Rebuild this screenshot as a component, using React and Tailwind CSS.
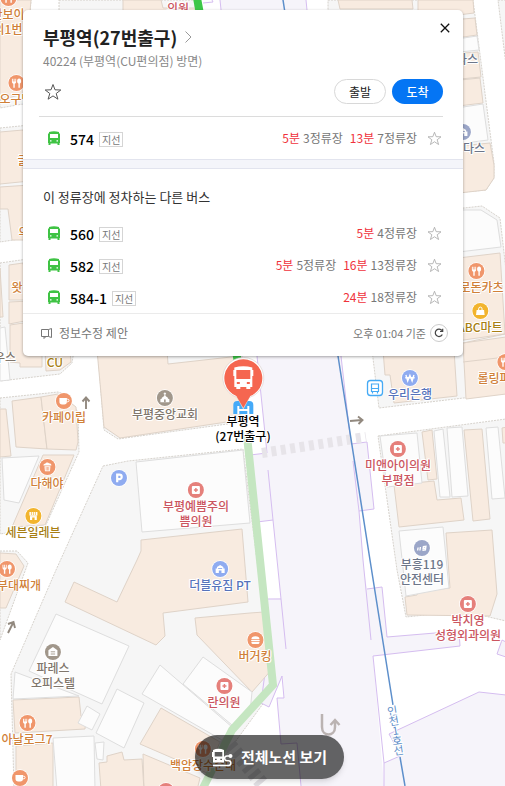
import React from 'react';

const others = [
  { id: '560', arrivals: [['5분', '4정류장']] },
  { id: '582', arrivals: [['5분', '5정류장'], ['16분', '13정류장']] },
  { id: '584-1', arrivals: [['24분', '18정류장']] },
];

// city blocks with the dashed kerb
const blocks = [
  '0,0 31,0 23,104 0,108',
  '59,0 195,0 195,40 59,40',
  '0,128 40,124 40,236 0,242',
  '0,263 90,250 72,363 60,374 0,381',
  '0,398 58,392 64,394 78,412 79,452 45,527 0,534',
  '0,551 17,551 28,563 0,640',
  '97,340 104,430 118,439 242,422 242,340',
  '103,466 128,461 243,449 262,600 276,686 200,790 14,790 11,674 56,570',
  '328,0 473,0 494,163 494,178 486,190 328,205',
  '400,215 482,206 500,218 506,270 506,393 379,408 372,350',
  '498,0 506,0 506,65',
  '378,436 506,419 506,621 463,611 406,617 397,570',
];

const tan = [
  '0,0 31,0 23,94 0,100',
  '123,0 161,0 163,8 195,8 195,30 123,30',
  '0,132 23,130 40,180 0,184',
  '0,187 30,185 30,240 12,240 8,209 0,209',
  '9,265 23,263 30,300 9,300',
  '9,302 30,301 30,320 9,324',
  '0,268 3,317 0,317',
  '10,325 30,322 42,345 42,367 20,367 20,363 10,362',
  '45,350 70,350 71,362 60,370 46,371',
  '12,401 41,397 47,449 16,447',
  '41,397 58,394 62,396 76,407 78,442 76,450 47,449',
  '0,409 6,409 11,456 0,457',
  '43,455 74,455 45,525 12,527',
  '0,553 16,554 24,566 6,608 0,608',
  '97,350 167,350 168,364 240,356 240,420 120,438 104,427',
  '141,540 242,529 248,602 163,613 165,636 156,645 65,602 74,582 117,602 137,560 141,551',
  '195,618 250,613 264,612 273,668 252,692 197,635',
  '13,700 79,697 81,716 86,718 85,729 15,733',
  '161,708 220,742 207,773 140,744',
  '143,754 200,778 197,790 144,790',
  '99,763 107,762 107,756 122,752 124,760 142,759 144,790 101,790',
  '16,746 53,743 53,790 16,790',
  '338,0 412,0 413,9 340,9',
  '418,0 473,0 474,13 418,20',
  '450,20 475,18 477,35 450,39',
  '450,54 478,52 481,77 450,80',
  '450,81 480,78 483,103 450,107',
  '450,147 490,143 494,165 494,178 486,190 450,194',
  '450,259 500,253 505,334 450,342',
  '463,343 506,337 506,394 466,399',
  '383,350 454,350 457,396 394,403 390,375 385,375',
  '422,432 432,430 437,479 428,480',
  '464,430 482,429 490,519 473,521 471,501',
  '502,428 507,427 507,443 503,443',
  '394,485 434,481 437,500 461,498 464,520 399,527',
  '446,533 492,530 497,594 490,616 407,615 405,597 417,595 418,591 450,588',
];

const pale = [
  '0,328 5,327 10,380 0,381',
  '2,458 39,456 19,503 4,500',
  '136,462 243,450 250,523 142,532',
  '56,614 129,646 102,704 29,671',
  '15,672 79,696 13,699',
  '87,706 100,714 92,730 78,723',
  '117,689 144,703 124,748 96,733',
  '160,665 232,727 222,740 142,694',
  '203,657 252,692 250,712 232,725 183,684',
  '53,738 94,736 95,790 57,790',
  '95,743 104,742 103,760 97,759',
  '450,40 477,36 479,50 450,53',
  '450,109 483,104 488,140 450,145',
  '450,210 481,210 497,220 501,247 450,253',
  '380,436 417,433 422,483 387,487',
  '434,431 443,429 450,497 440,497',
  '447,428 462,427 468,496 452,497',
  '486,428 498,427 505,498 492,499',
  '399,531 443,527 449,588 406,596',
];

const tones = {
  food: 'text-[#d08038]',
  clinic: 'text-[#cb5560]',
  gray: 'text-[#80766c]',
  blue: 'text-[#5673bb]',
  mart: 'text-[#a87f14]',
  slate: 'text-[#6d7689]',
};

const fills = {
  food: '#f0966b',
  clinic: '#e5807b',
  gray: '#a1978b',
  blue: '#8fabf0',
  mart: '#f2b42e',
  slate: '#9ba6c8',
};

const pins = [
  { x: 8, y: -2, tone: 'food', icon: 'fork', lines: ['안보이', '의1번'] },
  { x: 16, y: 83, tone: 'food', icon: 'fork', lines: ['오구당'] },
  { x: 64, y: 401, tone: 'food', icon: 'cup', lines: ['카페이립'] },
  { x: 165, y: 398, tone: 'gray', icon: 'church', lines: ['부평중앙교회'] },
  { x: 47, y: 467, tone: 'food', icon: 'beer', lines: ['다해야'] },
  { x: 119, y: 478, tone: 'blue', icon: 'parking', lines: [] },
  { x: 33, y: 516, tone: 'mart', icon: 'store', lines: ['세븐일레븐'] },
  { x: 196, y: 490, tone: 'clinic', icon: 'cross', lines: ['부평예쁨주의', '쁨의원'] },
  { x: 7, y: 569, tone: 'food', icon: 'fork', lines: [] },
  { x: 220, y: 569, tone: 'blue', icon: 'gym', lines: ['더블유짐 PT'] },
  { x: 53, y: 652, tone: 'gray', icon: 'home', lines: ['파레스', '오피스텔'] },
  { x: 255, y: 640, tone: 'food', icon: 'burger', lines: ['버거킹'] },
  { x: 224, y: 686, tone: 'clinic', icon: 'cross', lines: ['란의원'] },
  { x: 27, y: 723, tone: 'food', icon: 'fork', lines: ['아날로그7'] },
  { x: 203, y: 749, tone: 'food', icon: 'fork', lines: ['백암장수순대'] },
  { x: 20, y: 778, tone: 'food', icon: 'cup', lines: [] },
  { x: 166, y: 791, tone: 'clinic', icon: 'cross', lines: [] },
  { x: 410, y: 378, tone: 'blue', icon: 'won', lines: ['우리은행'] },
  { x: 398, y: 449, tone: 'clinic', icon: 'cross', lines: ['미앤아이의원', '부평점'] },
  { x: 422, y: 548, tone: 'slate', icon: 'fire', lines: ['부흥119', '안전센터'] },
  { x: 468, y: 604, tone: 'clinic', icon: 'cross', lines: ['박치영', '성형외과의원'] },
  { x: 463, y: 132, tone: 'slate', icon: 'gym', lines: ['아디다스'] },
  { x: 476, y: 271, tone: 'food', icon: 'fork', lines: ['새로돈카츠'] },
  { x: 480, y: 311, tone: 'mart', icon: 'bag', lines: ['ABC마트'] },
  { x: 505, y: 362, tone: 'food', icon: 'fork', lines: ['롤링파스타'] },
];

const labels = [
  { x: 178, y: 7, tone: 'clinic', text: '의원' },
  { x: 23, y: 159, tone: 'food', text: '글' },
  { x: 24, y: 231, tone: 'food', text: '의' },
  { x: 17, y: 286, tone: 'food', text: '왓' },
  { x: 5, y: 356, tone: 'gray', text: '우스' },
  { x: 55, y: 361, tone: 'mart', text: 'CU' },
  { x: 19, y: 584, tone: 'food', text: '부대찌개' },
  { x: 467, y: 58, tone: 'slate', text: '다스' },
];

const halo = '[text-shadow:1px_0_#fff,-1px_0_#fff,0_1px_#fff,0_-1px_#fff,1px_1px_#fff,-1px_-1px_#fff]';

function PinGlyph({ icon, bg }) {
  switch (icon) {
    case 'fork':
      return (
        <g fill="#fff">
          <path d="M3.500 3.800v3c0 1 .7 1.700 1.400 1.900v4h1.400v-4c.8-.2 1.400-.9 1.400-1.900v-3h-.8v2.700h-.8V3.800h-.9v2.700h-.8V3.800z" />
          <path d="M10.700 3.600C9.400 3.600 8.700 4.800 8.700 6.200c0 1.100.5 1.900 1.300 2.200v4.300h1.400V8.400c.8-.3 1.300-1.100 1.300-2.200 0-1.400-.7-2.600-2-2.600z" />
        </g>
      );
    case 'cup':
      return (
        <g>
          <path d="M3.500 5h7.500v3.800a2.700 2.700 0 0 1-2.700 2.700H6.200a2.700 2.700 0 0 1-2.700-2.700z" fill="#fff" />
          <path d="M11 6.200h.8a1.300 1.300 0 0 1 0 2.600H11" fill="none" stroke="#fff" />
        </g>
      );
    case 'beer':
      return (
        <g fill="#fff">
          <path d="M4 6.500C4 4.500 6 5 6.500 4c1-.8 2.500-.5 3 .3 1.500 0 2.500.7 2.500 2.200z" />
          <path d="M5 7.200h6l-.5 5h-5z" />
          <path d="M6.700 8v3.500M8 8v3.500M9.300 8v3.500" stroke={bg} strokeWidth=".7" />
        </g>
      );
    case 'church':
      return (
        <g>
          <path d="M8 2.500v4M6.800 3.700h2.400" stroke="#fff" />
          <path d="M8 5.500l3 2.200v.8l1.500.7v3h-9v-3L5 8.500v-.8z" fill="#fff" />
          <path d="M7.200 12.200V10a.8.8 0 0 1 1.600 0v2.200z" fill={bg} />
        </g>
      );
    case 'parking':
      return <path d="M6.200 12.300V4.700h2.300a2.200 2.200 0 0 1 0 4.400H6.200" fill="none" stroke="#fff" strokeWidth="2.200" />;
    case 'store':
      return (
        <g>
          <path d="M4 4h8v3.500H4zM4.600 8.200h6.800v3.800H9.200V9.500H6.800V12H4.600z" fill="#fff" />
          <path d="M4.500 7.500h7v1h-7z" fill="#fff" />
          <path d="M6 4v3M8 4v3M10 4v3" stroke={bg} strokeWidth=".7" />
        </g>
      );
    case 'cross':
      return (
        <g>
          <rect x="4" y="4" width="8" height="8" rx="1" fill="#fff" />
          <path d="M8 6v4M6 8h4" stroke={bg} strokeWidth="1.400" />
        </g>
      );
    case 'gym':
      return (
        <g>
          <path d="M3.500 12V7.500h1.300V6L8 4l3.200 2v1.500h1.300V12H9.300V9.500H6.700V12z" fill="#fff" />
          <path d="M6 7.500h4" stroke={bg} strokeWidth=".9" />
        </g>
      );
    case 'home':
      return (
        <g>
          <path d="M8 3l4.500 3.200V12h-9V6.200z" fill="#fff" />
          <path d="M5.800 7.800h4.400M5.800 10h4.400" stroke={bg} strokeWidth=".9" />
        </g>
      );
    case 'burger':
      return (
        <g fill="#fff">
          <path d="M4 7a4 2.800 0 0 1 8 0z" />
          <rect x="3.700" y="7.700" width="8.600" height="1.300" rx=".6" />
          <path d="M4 9.700h8v.8a1.500 1.500 0 0 1-1.500 1.500h-5A1.500 1.500 0 0 1 4 10.500z" />
        </g>
      );
    case 'won':
      return <path d="M4 5l1.800 6L8 5.500l2.200 5.500L12 5M3.300 7.700h9.400" fill="none" stroke="#fff" strokeWidth="1.400" />;
    case 'fire':
      return <path d="M4.200 7.500l-.5 3M6.500 7l-.5 3.500M8.500 10.200l3-.3.500-3.500-2.500.3-.3 1.700 2.400-.2" fill="none" stroke="#fff" strokeWidth="1.400" />;
    default:
      return (
        <g>
          <path d="M4.300 7h7.400l.6 5H3.700z" fill="#fff" />
          <path d="M6.300 7.500V5.800a1.700 1.700 0 0 1 3.400 0v1.700" fill="none" stroke="#fff" />
        </g>
      );
  }
}

function Pin({ pin }) {
  return (
    <div className="absolute flex -translate-x-1/2 flex-col items-center" style={{ left: pin.x, top: pin.y - 9 }}>
      <svg className="-mb-px h-[18px] w-[18px]" viewBox="-1 -1 18 18">
        <circle cx="8" cy="8" r="8.800" fill="#fff" />
        <circle cx="8" cy="8" r="8" fill={fills[pin.tone]} />
        <PinGlyph icon={pin.icon} bg={fills[pin.tone]} />
      </svg>
      {pin.lines.map(line => (
        <span key={line} className={`text-xs leading-[15px] font-medium whitespace-nowrap ${halo} ${tones[pin.tone]}`}>{line}</span>
      ))}
    </div>
  );
}

function MapCanvas() {
  return (
    <div className="absolute inset-0 overflow-hidden">
      <svg className="absolute top-0 left-0" width="505" height="786" viewBox="0 0 505 786" fill="none">
        {blocks.map(p => <polygon key={p} points={p} fill="#f6f6f6" stroke="#cdc8c0" strokeWidth=".8" strokeDasharray="2 1" />)}

        {/* station area */}
        <g fill="#f6f4fa">
          <path d="M220 0H306L341 356 351 443 367 443 374 509 359 511 364 570 367 589 382 587 387 637 459 631 460 646 373 656 384 786H301L297 743 281 744 277 698 284 698 283 676 269 707 261 703 268 599 281 598 273 520 257 522 250 455 267 453 257 356z" />
          <path d="M384 763L400 756 389 734 479 692 506 695V786H384z" />
          <path d="M502 640L497 654 506 657V642z" />
        </g>
        <g stroke="#d5bdf0" strokeWidth="1">
          <path d="M203 3L213 2 212 0" />
          <path d="M220 0L257 356 267 453 250 455M257 522L273 520 268 470M273 520L281 599 268 599M281 599L286 649M265 673L261 703 269 707 282 676 284 698 277 698 281 744 297 743 301 786" />
          <path d="M306 0L341 356 351 444 367 442 374 509 359 511 353 461M359 511L363 560 371 640M367 589L382 587 387 637 459 631 460 646 373 656 384 763V786M384 763L400 756M394 743L389 734 479 692 506 695M506 642L502 640 497 654 506 657" />
        </g>

        {tan.map(p => <polygon key={p} points={p} fill="#f8ebe0" stroke="#dfd3c8" />)}
        {pale.map(p => <polygon key={p} points={p} fill="#fcfcfc" stroke="#dedede" />)}
        <path d="M463 362L506 357M463 343L505 334" stroke="#dfd3c8" />

        <path d="M262 453L366 437" stroke="#e7e4e9" strokeWidth="10" strokeDasharray="5 4.500" />
        <path d="M224 738L264 786" stroke="#e2e0e4" strokeWidth="14" strokeDasharray="5 4" />

        <path d="M247 436L260 560 273 685 232 730 202 790" stroke="#c5e6c1" strokeWidth="8" />
        <path d="M197 -2L200 14M236 350L238 364" stroke="#3dc748" strokeWidth="8" />

        <path d="M283 0L338 356 370 560 393 705M400 757L405 786" stroke="#5d8fcb" strokeWidth="1.500" />

        <g stroke="#92897f" strokeWidth="1.900">
          <path d="M86 409V398M82.500 401.500L86 397.500 89.500 401.500" />
          <path d="M350 421L362 420M358 416.500L362.500 420 358.500 424" />
          <path d="M8 633L13 623M8 624L13.500 622 15 628" />
        </g>
        <path d="M322 714V727C322 737 335 737 335 727V721M330.500 725L335 720 339.500 725" stroke="#bbb3b2" strokeWidth="2.500" />

        {/* bus stop across the street */}
        <rect x="367.500" y="380.500" width="15" height="15" rx="3" fill="#fff" stroke="#45aaf5" strokeWidth="1.300" />
        <path d="M371.500 384h7v7.500h-7zM371.500 388.500h7M372.500 391.500v2M377.500 391.500v2" stroke="#45aaf5" strokeWidth="1.200" />

        <text
          x="0 0 0 0 0"
          y="0 10 20 30 40"
          transform="translate(393 715) rotate(-9)"
          className="fill-[#5b8cc8] text-[11px]"
          textAnchor="middle"
          stroke="#fff"
          strokeWidth="2"
          paintOrder="stroke"
        >
          인천1호선
        </text>
      </svg>

      {labels.map(l => (
        <span
          key={l.text + l.y}
          className={`absolute -translate-1/2 text-xs leading-[15px] font-medium whitespace-nowrap ${halo} ${tones[l.tone]}`}
          style={{ left: l.x, top: l.y }}
        >
          {l.text}
        </span>
      ))}
      {pins.map(p => <Pin key={`${p.x}-${p.y}`} pin={p} />)}

      {/* selected stop */}
      <div className="absolute top-[356px] left-[243px] flex -translate-x-1/2 flex-col items-center">
        <svg width="44" height="58" viewBox="0 0 44 58" className="-mb-px">
          <rect x="12" y="45" width="20" height="16" rx="4" fill="#45aaf8" />
          <path d="M17 50v11M27 50v11M17 54h10" stroke="#fff" strokeWidth="2" />
          <path d="M22 53L16 41.500A20.500 20.500 0 1 1 28 41.500z" fill="#fff" stroke="#d8cfcb" strokeWidth=".6" />
          <path d="M22 52L15 40A19 19 0 1 1 29 40z" fill="#f56650" />
          <path d="M13 11.500Q22 9 31 11.500V14h1v6h-1v11h-2v2h-4v-2h-6v2h-4v-2h-2V20h-1v-6h1z" fill="#fff" />
          <path d="M15 14h14v9H15z" fill="#f56650" />
          <path d="M15.500 27h3M25.500 27h3" stroke="#f56650" strokeWidth="2" />
        </svg>
        <span className={`text-center text-xs leading-[15px] font-medium whitespace-nowrap text-black ${halo}`}>부평역<br />(27번출구)</span>
      </div>
    </div>
  );
}

function BusIcon() {
  return (
    <svg width="12" height="14" viewBox="0 0 12 14" className="shrink-0">
      <path d="M1 1Q6-.6 11 1V2.500h1V12h-.5v2h-2v-1.500h-7V14h-2v-2H0V2.500h1z" fill="#3fc344" />
      <path d="M2 3h8v4H2z" fill="#fff" />
      <path d="M2 9.800h1.500M8.500 9.800H10" stroke="#fff" strokeWidth="1.200" />
    </svg>
  );
}

function Star({ size, color }) {
  return (
    <svg width={size} height={size} viewBox="0 0 18 18" fill="none" stroke={color}>
      <path d="M9 1.500l2 5.300 5.800.2-4.600 3.500 1.700 5.700L9 12.900l-4.900 3.300 1.700-5.700L1.200 7 7 6.800z" />
    </svg>
  );
}

function BusRow({ id, arrivals }) {
  return (
    <li className="flex h-8 items-center pr-[21px] pl-[25px]">
      <BusIcon />
      <a href={`#${id}`} className="ml-2.5 pt-0.5 text-sm leading-5 font-medium text-black">{id}</a>
      <span className="mt-0.5 ml-[5px] border border-[#d5d5d5] px-[2px] text-[10px] leading-[13px] text-[#777]">지선</span>
      <span className="ml-auto flex gap-[7px] text-xs text-[#777]">
        {arrivals.map(([time, stops]) => (
          <span key={time}><em className="mr-[3px] text-[#f0323c] not-italic">{time}</em>{stops}</span>
        ))}
      </span>
      <button type="button" aria-label="즐겨찾기" className="ml-2.5"><Star size={15} color="#aaa" /></button>
    </li>
  );
}

function StopCard() {
  return (
    <section className="relative rounded-[5px] bg-white shadow-[0_1px_3px_rgba(0,0,0,0.35)]">
      <button type="button" aria-label="닫기" className="absolute top-3 right-3 p-px">
        <svg width="10" height="10" viewBox="0 0 10 10" stroke="#111" strokeWidth="1.300"><path d="M.8.800l8.400 8.400M9.200.8L.8 9.200" /></svg>
      </button>

      <header className="px-5 pt-[13px]">
        <h1 className="text-lg leading-7 font-bold text-[#222]">
          <a href="#stop" className="flex items-center gap-2">
            부평역(27번출구)
            <svg width="7" height="12" viewBox="0 0 7 12" fill="none" stroke="#999"><path d="M.5.500L6 6 .5 11.500" /></svg>
          </a>
        </h1>
        <p className="mt-0.5 text-xs leading-4 text-[#888]">40224 (부평역(CU편의점) 방면)</p>
        <div className="mt-2.5 flex items-center gap-1.5">
          <button type="button" aria-label="즐겨찾기" className="mr-auto ml-px"><Star size={18} color="#555" /></button>
          <button type="button" className="h-[25px] w-[52px] rounded-full border border-[#d8d8d8] text-xs text-[#222]">출발</button>
          <button type="button" className="h-[25px] w-[51px] rounded-full bg-[#0475f4] text-xs font-medium text-white">도착</button>
        </div>
      </header>

      <div className="mx-4 mr-5 mt-3 border-t border-[#dcdcdc]" />
      <ul className="py-[5px]">
        <BusRow id="574" arrivals={[['5분', '3정류장'], ['13분', '7정류장']]} />
      </ul>
      <div className="h-2.5 border-y border-[#e2e4ee] bg-[#f4f5fa]" />

      <h2 className="px-5 pt-[18px] pb-2.5 text-[13px] leading-5 text-[#333]">이 정류장에 정차하는 다른 버스</h2>
      <ul>
        {others.map(bus => <BusRow key={bus.id} {...bus} />)}
      </ul>

      <footer className="flex h-[43px] items-center border-t border-[#ebebeb] pr-[15px] pl-[18px] pb-1 text-[#777]">
        <button type="button" className="flex items-center gap-[7px] text-xs">
          <svg width="11" height="11" viewBox="0 0 11 11" fill="none" stroke="#777"><path d="M.5 1.500H7.500V8.500H.5zM7.500 1.500L10.500.500V9.500L7.500 8.500M3 8.500V10.500L5 8.500" /></svg>
          정보수정 제안
        </button>
        <span className="ml-auto text-[11px]">오후 01:04 기준</span>
        <button type="button" aria-label="새로고침" className="ml-1 flex h-[18px] w-[18px] items-center justify-center rounded-full border border-[#ccc]">
          <svg width="10" height="10" viewBox="0 0 10 10" fill="none" stroke="#444" strokeWidth="1.200"><path d="M8.300 6.500A3.700 3.700 0 1 1 8 2.700M8.700.800V3.500H6" /></svg>
        </button>
      </footer>
    </section>
  );
}

export default function App() {
  return (
    <main className="relative flex min-h-screen flex-col justify-between overflow-hidden bg-white pt-2.5 pb-[7px] font-['Noto_Sans_CJK_KR',sans-serif]">
      <MapCanvas />
      <div className="relative pr-[42px] pl-[23px]">
        <StopCard />
      </div>
      <div className="relative flex justify-center pl-[34px]">
        <button type="button" className="flex h-11 items-center gap-2 rounded-full bg-black/60 px-[17px] text-[15px] font-bold text-white shadow-md">
          <svg width="21" height="19" viewBox="0 0 21 19" fill="none">
            <path d="M1 2Q6.500-.5 12 2V14.500H1V9H0V4h1z" fill="#fff" />
            <path d="M2.700 4h7.600v4.500H2.700z" fill="#5c5c5c" />
            <path d="M3 11.300h1.700M8.300 11.300H10" stroke="#5c5c5c" strokeWidth="1.300" />
            <path d="M1 17.500H16.500a2.400 2.400 0 0 0 0-4.800H15a2.300 2.300 0 0 1 0-4.700H18" stroke="#fff" strokeWidth="1.500" />
            <circle cx="18.500" cy="8" r="2" fill="#fff" />
          </svg>
          전체노선 보기
        </button>
      </div>
    </main>
  );
}
